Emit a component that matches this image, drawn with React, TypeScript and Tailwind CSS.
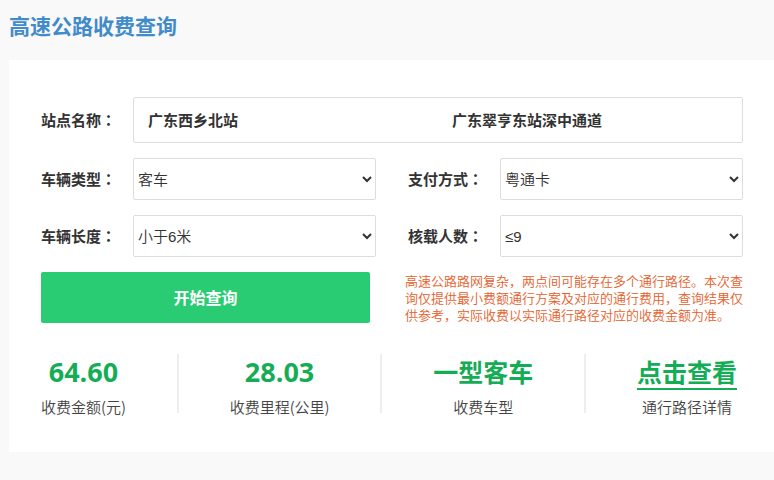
import { useState } from 'react';

interface Field {
    id: string;
    label: string;
    options: string[];
}

const FIELDS: Field[] = [
    { id: 'vehicleType', label: '车辆类型', options: ['客车', '货车'] },
    { id: 'payment', label: '支付方式', options: ['粤通卡', '现金'] },
    { id: 'length', label: '车辆长度', options: ['小于6米', '大于等于6米'] },
    { id: 'seats', label: '核载人数', options: ['≤9', '10-19', '≥20'] },
];

const STATS = [
    { value: '64.60', label: '收费金额(元)' },
    { value: '28.03', label: '收费里程(公里)' },
    { value: '一型客车', label: '收费车型', cjk: true },
    { value: '点击查看', label: '通行路径详情', cjk: true, href: '#route' },
];

function FieldLabel({ htmlFor, text }: { htmlFor: string; text: string }) {
    return (
        <label htmlFor={htmlFor} className="w-[92px] shrink-0 text-[15px] font-bold">
            {text}<span lang="zh-TW" className="font-['Noto_Sans_CJK_TC',sans-serif]">：</span>
        </label>
    );
}

export default function App() {
    const [from, setFrom] = useState('广东西乡北站');
    const [to, setTo]     = useState('广东翠亨东站深中通道');

    return (
        <div lang="zh-CN" className="min-h-screen bg-[#f9f9f9] pl-[9px] pb-7 text-[#333] font-['Noto_Sans_CJK_SC',sans-serif]">
            <h1 className="flex h-[60px] items-center pb-2 text-[21px] font-bold text-[#428bca]">高速公路收费查询</h1>

            <main className="bg-white pt-[37px] pr-[31px] pb-[39px] pl-8">
                <form onSubmit={(e) => e.preventDefault()}>
                    {/* Stations */}
                    <div className="flex items-center">
                        <FieldLabel htmlFor="from" text="站点名称" />
                        <div className="flex h-[46px] min-w-0 flex-1 rounded-xs border border-[#ddd] text-[15px] font-bold">
                            <input
                                id="from"
                                value={from}
                                onChange={(e) => setFrom(e.target.value)}
                                className="min-w-0 flex-1 px-[14px] outline-none"
                            />
                            <input
                                aria-label="终点站"
                                value={to}
                                onChange={(e) => setTo(e.target.value)}
                                className="min-w-0 flex-1 px-3 outline-none"
                            />
                        </div>
                    </div>

                    {/* Vehicle and payment */}
                    <div className="mt-[15px] grid grid-cols-2 gap-x-8 gap-y-[15px]">
                        {FIELDS.map((f) => (
                            <div key={f.id} className="flex items-center">
                                <FieldLabel htmlFor={f.id} text={f.label} />
                                <select id={f.id} className="h-[42px] min-w-0 flex-1 rounded-xs border border-[#ddd] bg-white text-[15px] font-[350] font-['Liberation_Sans','Noto_Sans_CJK_SC',sans-serif]">
                                    {f.options.map((o) => <option key={o}>{o}</option>)}
                                </select>
                            </div>
                        ))}
                    </div>

                    <div className="mt-[15px] flex gap-[35px]">
                        <button type="submit" className="h-[51px] flex-1 rounded-xs bg-[#29cc72] pb-[2px] text-base font-bold text-white">
                            开始查询
                        </button>
                        <p className="w-[338px] text-[13px] leading-[17px] font-[350] text-[#e4602a]">
                            高速公路路网复杂，两点间可能存在多个通行路径。本次查询仅提供最小费额通行方案及对应的通行费用，查询结果仅供参考，实际收费以实际通行路径对应的收费金额为准。
                        </p>
                    </div>
                </form>

                {/* Result */}
                <div className="mt-[31px] flex justify-between pr-[6px]">
                    {STATS.map((s, i) => (
                        <div key={s.label} className="contents">
                            {i > 0 && <div className="h-[59px] w-[2px] bg-[#eee]" />}
                            <div className="flex flex-col items-center">
                                <div className={`flex h-9 items-center font-bold text-[#14ad56] ${s.cjk ? 'text-[25px]' : "text-[27px] font-['Open_Sans',sans-serif]"}`}>
                                    {s.href
                                        ? <a href={s.href} className="border-b-2 border-[#14ad56] leading-[34px]">{s.value}</a>
                                        : s.value
                                    }
                                </div>
                                <div className="h-[23px] text-[15px] leading-[34px] font-[350] text-[#444]">{s.label}</div>
                            </div>
                        </div>
                    ))}
                </div>
            </main>
        </div>
    );
}
